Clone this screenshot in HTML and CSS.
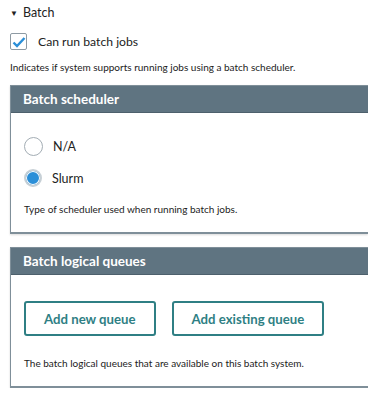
FILE: index.html
```html
<!DOCTYPE html>
<html lang="en">
<head>
  <meta charset="UTF-8">
  <meta name="viewport" content="width=device-width, initial-scale=1.0">
  <title>Batch</title>
  <link rel="stylesheet" href="styles.css">
</head>
<body>

<details class="section" open>
  <summary>Batch</summary>

  <label class="check-row">
    <span class="checkbox">
      <svg width="14" height="12" viewBox="0 0 14 12"><path d="M1.5 6.5 L5 10 L12.5 2" fill="none" stroke="#2b8fd8" stroke-width="2.4"/></svg>
    </span>
    Can run batch jobs
  </label>
  <p class="help">Indicates if system supports running jobs using a batch scheduler.</p>

  <!-- Batch scheduler -->
  <div class="panel">
    <div class="panel-header">Batch scheduler</div>
    <div class="panel-body">
      <div class="radio-list">
        <label class="radio-row"><span class="radio"></span>N/A</label>
        <label class="radio-row"><span class="radio checked"></span>Slurm</label>
      </div>
      <p class="help">Type of scheduler used when running batch jobs.</p>
    </div>
  </div>

  <!-- Batch logical queues -->
  <div class="panel">
    <div class="panel-header">Batch logical queues</div>
    <div class="panel-body">
      <div class="buttons">
        <button class="btn-outline">Add new queue</button>
        <button class="btn-outline">Add existing queue</button>
      </div>
      <p class="help queues-help">The batch logical queues that are available on this batch system.</p>
    </div>
  </div>
</details>

</body>
</html>
```

FILE: styles.css
```css
body {
  font-family: Lato, Arial, sans-serif;
  color: #222;
  margin: 0;
  padding: 0;
  background-color: white;
}

.section {
  padding: 4px 0 0 10px;
}

summary {
  list-style: none;
  font-size: 12.5px;
  height: 17px;
  line-height: 17px;
}

summary::before {
  content: "\25BC";
  font-size: 8px;
  margin-right: 5px;
  position: relative;
  top: -1px;
}

.check-row {
  display: flex;
  align-items: center;
  gap: 11px;
  margin-top: 12px;
  font-size: 12.2px;
}

.checkbox {
  width: 15px;
  height: 15px;
  border: 1.5px solid #8e9aa3;
  border-radius: 2px;
  display: flex;
  align-items: center;
  justify-content: center;
}

.help {
  font-size: 10px;
  margin: 11px 0 0;
}

.panel {
  border: 1px solid #7f8f99;
  border-right: none;
  border-bottom-width: 2px;
  margin-top: 12px;
  box-shadow: 0 1px 2px rgba(0, 0, 0, 0.15);
}

.panel + .panel {
  margin-top: 13px;
}

.panel-header {
  background-color: #5f7481;
  color: white;
  font-weight: bold;
  font-size: 13.5px;
  height: 26px;
  line-height: 26px;
  padding-left: 12px;
  border-bottom: 1px solid #4d606c;
}

.panel-body {
  padding: 24px 13px 17px;
}

.radio-list {
  display: flex;
  flex-direction: column;
  gap: 13px;
}

.radio-row {
  display: flex;
  align-items: center;
  gap: 10px;
  font-size: 12.5px;
}

.radio {
  width: 17px;
  height: 17px;
  border: 1px solid #a3adb4;
  border-radius: 50%;
  box-sizing: content-box;
  background: white;
}

.radio.checked {
  width: 14px;
  height: 14px;
  border: 2.5px solid #c7d0d6;
  background: #2b8fd8;
  box-shadow: inset 0 0 0 1px white;
}

.panel-body .help {
  margin-top: 16px;
}

.panel-body .queues-help {
  margin-top: 21px;
}

.buttons {
  display: flex;
  gap: 16px;
  margin-top: 2px;
}

.btn-outline {
  font-family: inherit;
  background: white;
  border: 2px solid #2f7f84;
  border-radius: 3px;
  color: #2f7f84;
  font-weight: bold;
  font-size: 13.2px;
  height: 35px;
  padding: 0 18px;
  cursor: pointer;
}
```
